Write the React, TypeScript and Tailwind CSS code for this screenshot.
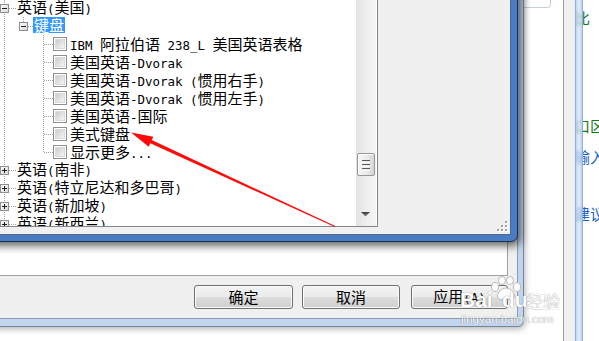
import React from "react";

type Row = { level: 0 | 1 | 2; text: string; selected?: boolean };

const rows: Row[] = [
  { level: 0, text: "英语(美国)" },
  { level: 1, text: "键盘", selected: true },
  { level: 2, text: "IBM 阿拉伯语 238_L 美国英语表格" },
  { level: 2, text: "美国英语-Dvorak" },
  { level: 2, text: "美国英语-Dvorak (惯用右手)" },
  { level: 2, text: "美国英语-Dvorak (惯用左手)" },
  { level: 2, text: "美国英语-国际" },
  { level: 2, text: "美式键盘" },
  { level: 2, text: "显示更多..." },
  { level: 0, text: "英语(南非)" },
  { level: 0, text: "英语(特立尼达和多巴哥)" },
  { level: 0, text: "英语(新加坡)" },
  { level: 0, text: "英语(新西兰)" },
];

function T({ s }: { s: string }) {
  const parts = s.split(/([\x20-\x7e]+)/).filter((p) => p.length > 0);
  return (
    <span className="leading-[18px]">
      {parts.map((p, i) =>
        /^[\x20-\x7e]+$/.test(p) ? (
          <span key={i} className="font-['DejaVu_Sans_Mono',monospace] text-[12.45px] whitespace-pre">
            {p}
          </span>
        ) : (
          <span key={i}>{p}</span>
        )
      )}
    </span>
  );
}

function Checkbox() {
  return (
    <span className="w-[14px] h-[14px] shrink-0 border border-[#8e8f8f] bg-white p-[1px] flex">
      <span className="flex-1 bg-linear-to-br from-[#c9ccd1] to-[#f5f5f5] border border-[#dadada]" />
    </span>
  );
}

function TreeRow({ r }: { r: Row }) {
  if (r.level === 0) {
    return (
      <div className="h-[18px] flex items-center whitespace-nowrap pl-[17px]">
        <T s={r.text} />
      </div>
    );
  }
  if (r.level === 1) {
    return (
      <div className="h-[18px] flex items-center whitespace-nowrap pl-[33px]">
        <span className="bg-[#3399ff] text-white px-[1px] h-[16px] flex items-center mt-[-2px]">
          <T s={r.text} />
        </span>
      </div>
    );
  }
  return (
    <div className="h-[18px] flex items-center whitespace-nowrap pl-[53px]">
      <Checkbox />
      <span className="ml-[3px]">
        <T s={r.text} />
      </span>
    </div>
  );
}

function Expander({ cx, cy, plus }: { cx: number; cy: number; plus?: boolean }) {
  return (
    <g shapeRendering="crispEdges">
      <rect x={cx - 3.5} y={cy - 3.5} width={8} height={8} fill="url(#expg)" stroke="#8e8f8f" />
      <line x1={cx - 2} x2={cx + 3} y1={cy + 0.5} y2={cy + 0.5} stroke="#1e1e1e" />
      {plus && <line x1={cx + 0.5} x2={cx + 0.5} y1={cy - 2} y2={cy + 3} stroke="#1e1e1e" />}
    </g>
  );
}

function TreeLines() {
  const centers = rows.map((_, i) => 8 + 18 * i);
  const dot = { stroke: "#a0a0a0", strokeDasharray: "1 1", shapeRendering: "crispEdges" as const };
  return (
    <svg className="absolute left-0 top-[1px] pointer-events-none" width={356} height={230}>
      <defs>
        <linearGradient id="expg" x1="0" y1="0" x2="1" y2="1">
          <stop offset="0" stopColor="#ffffff" />
          <stop offset="1" stopColor="#d6d6d6" />
        </linearGradient>
      </defs>
      <line x1={4.5} x2={4.5} y1={0} y2={230} {...dot} />
      {[0, 9, 10, 11, 12].map((i) => (
        <line key={"h0" + i} x1={9} x2={16} y1={centers[i] + 0.5} y2={centers[i] + 0.5} {...dot} />
      ))}
      <line x1={23.5} x2={23.5} y1={17} y2={22} {...dot} />
      <line x1={28} x2={33} y1={26.5} y2={26.5} {...dot} />
      <line x1={43.5} x2={43.5} y1={35} y2={153} {...dot} />
      {[2, 3, 4, 5, 6, 7, 8].map((i) => (
        <line key={"h2" + i} x1={44} x2={53} y1={centers[i] + 0.5} y2={centers[i] + 0.5} {...dot} />
      ))}
      <Expander cx={4} cy={8} />
      <Expander cx={23} cy={26} />
      {[9, 10, 11, 12].map((i) => (
        <Expander key={"e" + i} cx={4} cy={centers[i]} plus />
      ))}
    </svg>
  );
}

function Scrollbar() {
  return (
    <div className="w-[21px] h-full flex flex-col bg-linear-to-r from-[#e2e2e2] via-[#eeeeee] to-[#f4f4f4] border-r border-white">
      <div className="h-[154px] shrink-0" />
      <div className="ml-[1px] w-[18px] h-[23px] shrink-0 rounded-[2px] border border-[#979797] bg-linear-to-r from-[#f7f7f7] via-[#ececec] to-[#d6d6d6] shadow-[inset_1px_1px_0_#ffffff] flex flex-col items-center pt-[6px] gap-[1px]">
        <div className="w-[8px] h-px bg-[#5a5a5a]" />
        <div className="w-[8px] h-px bg-[#fafafa]" />
        <div className="w-[8px] h-px bg-[#5a5a5a]" />
        <div className="w-[8px] h-px bg-[#fafafa]" />
        <div className="w-[8px] h-px bg-[#5a5a5a]" />
        <div className="w-[8px] h-px bg-[#fafafa]" />
      </div>
      <div className="flex-1" />
      <div className="h-[22px] shrink-0">
        <svg width={20} height={22}>
          <defs>
            <linearGradient id="arrg" x1="0" y1="0" x2="0" y2="1">
              <stop offset="0" stopColor="#3a3a3a" />
              <stop offset="1" stopColor="#8a8a8a" />
            </linearGradient>
          </defs>
          <polygon points="5,8 14,8 9.5,12.5" fill="url(#arrg)" />
        </svg>
      </div>
    </div>
  );
}

function Grip() {
  const dots: [number, number][] = [
    [8, 0],
    [4, 4],
    [8, 4],
    [0, 8],
    [4, 8],
    [8, 8],
  ];
  return (
    <svg className="absolute right-[2px] bottom-[2px]" width={11} height={11} shapeRendering="crispEdges">
      {dots.map(([x, y], i) => (
        <g key={i}>
          <rect x={x + 1} y={y + 1} width={2} height={2} fill="#ffffff" />
          <rect x={x} y={y} width={2} height={2} fill="#a3a3a3" />
        </g>
      ))}
    </svg>
  );
}

function WinButton({ label, w }: { label: string; w: string }) {
  return (
    <div
      className={`${w} h-[24px] rounded-[3px] border border-[#707070] bg-[linear-gradient(to_bottom,#f2f2f2_0%,#ebebeb_50%,#dddddd_51%,#cfcfcf_100%)] shadow-[inset_0_0_0_1px_#fbfbfb] flex items-center justify-center text-black`}
    >
      <T s={label} />
    </div>
  );
}

function Arrow() {
  return (
    <svg className="absolute left-0 top-0 pointer-events-none" width={599} height={341}>
      <polygon
        points="131,132.5 153.3,136.7 151.75,140.07 335.2,226.05 334.8,226.95 150.25,143.33 148.7,146.7"
        fill="#ff0a0a"
      />
    </svg>
  );
}

function Watermark() {
  const ts = "[text-shadow:0_0_1px_rgba(0,0,0,0.35),0_0_1px_rgba(0,0,0,0.25)]";
  return (
    <div className="absolute left-[458px] top-[274px] w-[112px] h-[54px] pointer-events-none">
      <div className={`absolute left-[2px] top-[14px] font-['Liberation_Sans',sans-serif] font-bold text-[21px] leading-[24px] text-white ${ts}`}>
        Bai
      </div>
      <svg className="absolute left-[32px] top-[2px]" width={32} height={26}>
        <g fill="rgba(255,255,255,0.95)" stroke="#b8b8b8" strokeWidth={1}>
          <ellipse cx={5} cy={11} rx={3.5} ry={4.5} />
          <ellipse cx={12} cy={4.5} rx={3.5} ry={4} />
          <ellipse cx={20} cy={4.5} rx={3.5} ry={4} />
          <ellipse cx={27} cy={11} rx={3.5} ry={4.5} />
          <path d="M16 12 C 10 12, 6 19, 8 22 C 10 25, 14 23, 16 23 C 18 23, 22 25, 24 22 C 26 19, 22 12, 16 12 Z" />
        </g>
      </svg>
      <div className={`absolute left-[44px] top-[14px] font-['Liberation_Sans',sans-serif] font-bold text-[21px] leading-[24px] text-white ${ts}`}>
        du
      </div>
      <div className={`absolute left-[68px] top-[17px] font-['Noto_Sans_CJK_SC',sans-serif] text-[17px] leading-[20px] text-white ${ts}`}>
        经验
      </div>
      <div className={`absolute left-[3px] top-[38px] font-['Liberation_Sans',sans-serif] text-[11.5px] leading-[14px] text-white ${ts}`}>
        jingyan.baidu.com
      </div>
    </div>
  );
}

export default function App() {
  return (
    <div className="relative w-[599px] h-[341px] overflow-hidden bg-white flex font-['Noto_Sans_CJK_SC','Noto_Sans_CJK_JP',sans-serif] text-[15px] text-black">
      {/* background window on the right */}
      <div className="w-[524px] shrink-0" />
      <div className="w-[39px] shrink-0 bg-white">
        <div className="w-[27px] h-[8px] border-r border-b border-[#c6d0dc] rounded-br-[4px]" />
      </div>
      <div className="w-px shrink-0 bg-[#9c9c9c]" />
      <div className="w-[11px] shrink-0 bg-[#f0f0f0]" />
      <div className="w-[8px] shrink-0 relative z-10 border-l border-r border-[#8fb0dc] bg-linear-to-r from-[#aec8eb]/75 via-[#d6e5f7]/70 to-[#a9c4e9]/75 backdrop-blur-[1.5px]" />
      <div className="flex-1 ml-[-8px] flex flex-col whitespace-nowrap">
        <div className="mt-[8px] h-[20px] leading-[20px] text-[#137a1b]">比</div>
        <div className="mt-[88px] h-[20px] leading-[20px] text-[#137a1b]">口区</div>
        <div className="mt-[11px] h-[20px] leading-[20px] text-[#1d63c6]">输入</div>
        <div className="mt-[37px] h-[20px] leading-[20px] text-[#1d63c6]">建议</div>
      </div>

      {/* parent dialog (inactive) */}
      <div className="absolute left-[-20px] top-[-20px] w-[544px] h-[347px] rounded-br-[6px] border border-[#74859b] bg-[#c2d5ee] pt-[5px] pl-[5px] pr-[5px] pb-[7px] shadow-[1px_2px_6px_rgba(0,0,0,0.3)]">
        <div className="w-full h-full border border-[#8b9cb2] bg-[#f0f0f0] flex flex-col">
          <div className="h-[289px] shrink-0 mr-[9px] bg-white border-r border-b border-[#a0a0a0]" />
          <div className="mt-[9px] h-[24px] flex justify-end pr-[9px]">
            <WinButton label="确定" w="w-[99px]" />
            <div className="w-[9px]" />
            <WinButton label="取消" w="w-[98px]" />
            <div className="w-[11px]" />
            <WinButton label="应用(A)" w="w-[97px]" />
          </div>
        </div>
      </div>

      {/* child dialog (active) */}
      <div className="absolute left-[-20px] top-[-20px] w-[538px] h-[262px] rounded-br-[7px] border border-[#1e3050] bg-[#4a7cc3] p-[6px] shadow-[2px_3px_9px_1px_rgba(0,0,0,0.6)]">
        <div className="relative w-full h-full border border-[#4f678c] bg-[#f0f0f0] flex items-start">
          <div className="ml-[11px] mt-[10px] w-[379px] h-[229px] shrink-0 border border-[#828790] bg-white flex">
            <div className="relative w-[356px] h-full overflow-hidden">
              <div className="flex flex-col">
                {rows.map((r, i) => (
                  <TreeRow key={i} r={r} />
                ))}
              </div>
              <TreeLines />
            </div>
            <Scrollbar />
          </div>
          <Grip />
        </div>
      </div>

      <Arrow />
      <Watermark />
    </div>
  );
}
